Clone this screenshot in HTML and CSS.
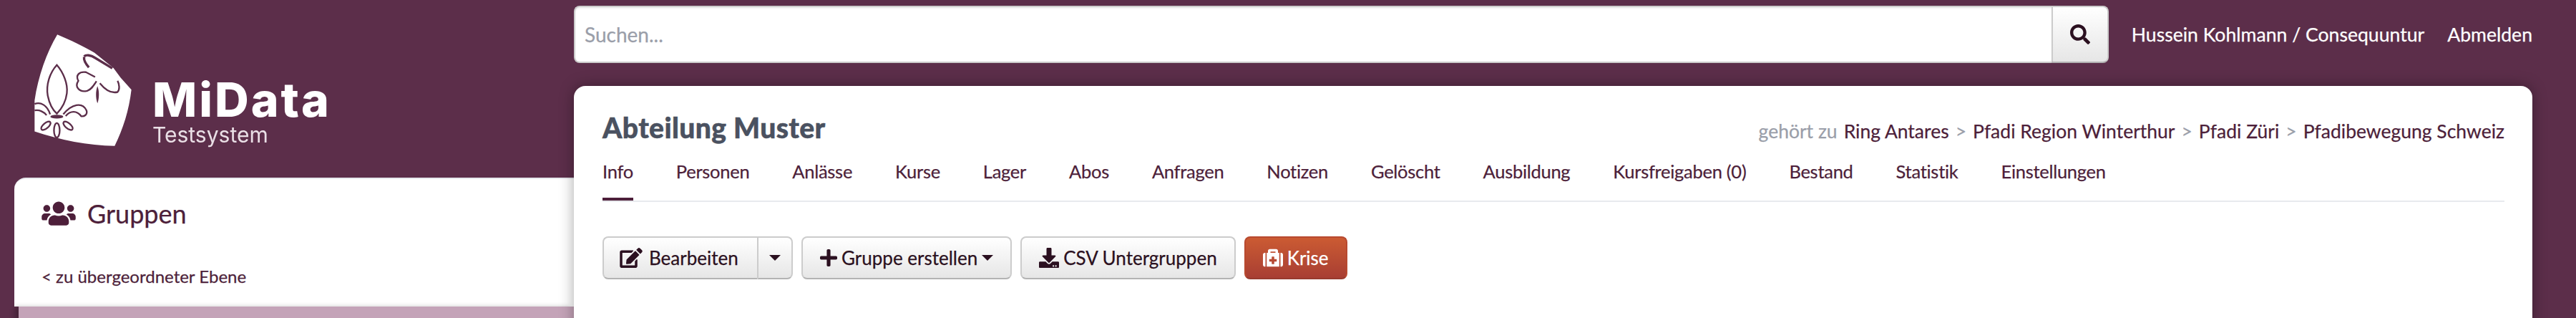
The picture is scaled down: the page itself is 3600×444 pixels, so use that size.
FILE: index.html
```html
<!DOCTYPE html>
<html lang="de">
<head>
<meta charset="utf-8">
<title>MiData</title>
<link rel="stylesheet" href="styles.css">
</head>
<body>
<div class="page">
  <aside class="aside">
    <div class="brand">
      <svg class="crest" viewBox="84 54 410 470" aria-hidden="true">
        <path class="crest-body" d="M180 55C235 78 290 105 335 130L415 195L445 235L490 285C480 370 455 450 420 520C310 520 190 495 85 460L85 330C100 230 135 130 180 55Z"/>
        <path class="crest-line" d="M178 182C148 215 132 265 140 310C147 345 163 372 178 385C195 368 215 340 220 300C225 262 205 212 178 182Z"/>
        <path class="crest-line" d="M205 388C240 345 285 335 302 372C308 390 292 398 280 396C262 372 235 372 215 395"/>
        <path class="crest-line" d="M85 345C110 335 138 350 150 388M85 372C105 368 125 378 135 392"/>
        <ellipse class="crest-fill" cx="178" cy="398" rx="27" ry="8"/>
        <ellipse class="crest-line" cx="132" cy="436" rx="24" ry="11" transform="rotate(-40 132 436)"/>
        <ellipse class="crest-line" cx="178" cy="455" rx="12" ry="30"/>
        <ellipse class="crest-line" cx="225" cy="436" rx="24" ry="11" transform="rotate(40 225 436)"/>
        <path class="crest-line" d="M338 232L300 212C272 208 255 225 268 248C252 272 270 298 305 290C322 285 332 268 344 250"/>
        <path class="crest-thick" d="M292 146C300 138 320 140 338 152L410 196M292 148C290 162 300 178 312 192"/>
        <path class="crest-line" d="M358 258C380 285 405 302 432 295C442 285 440 262 432 248"/>
        <path class="crest-fill" d="M348 270C356 290 356 320 348 342C340 320 340 290 348 270Z"/>
      </svg>
      <div class="wordmark">
        <span class="wordmark-name">MiData</span>
        <span class="wordmark-sub">Testsystem</span>
      </div>
    </div>
    <section class="groups">
      <div class="groups-card">
        <h2 class="groups-title">
          <svg class="groups-icon" viewBox="0 0 640 512" aria-hidden="true"><path d="M96 224c35.3 0 64-28.7 64-64s-28.7-64-64-64-64 28.7-64 64 28.7 64 64 64zm448 0c35.3 0 64-28.7 64-64s-28.7-64-64-64-64 28.7-64 64 28.7 64 64 64zm32 32h-64c-17.6 0-33.5 7.1-45.1 18.6 40.3 22.1 68.9 62 75.1 109.4h66c17.7 0 32-14.3 32-32v-32c0-35.3-28.7-64-64-64zm-256 0c61.9 0 112-50.1 112-112S381.9 32 320 32 208 82.1 208 144s50.1 112 112 112zm76.8 32h-8.3c-20.8 10-43.9 16-68.5 16s-47.6-6-68.5-16h-8.3C179.6 288 128 339.6 128 403.2V432c0 26.5 21.5 48 48 48h288c26.5 0 48-21.5 48-48v-28.8c0-63.6-51.6-115.2-115.2-115.2zm-223.7-13.4C161.5 263.1 145.6 256 128 256H64c-35.3 0-64 28.7-64 64v32c0 17.7 14.3 32 32 32h65.9c6.3-47.4 34.9-87.3 75.2-109.4z"/></svg>
          Gruppen
        </h2>
        <a class="groups-up" href="#">&lt; zu übergeordneter Ebene</a>
      </div>
      <div class="groups-current"></div>
    </section>
  </aside>
  <div class="content">
    <header class="topbar">
      <form class="search">
        <input class="search-input" type="text" placeholder="Suchen...">
        <button class="search-btn" type="button" aria-label="Suchen">
          <svg class="search-icon" viewBox="0 0 512 512" aria-hidden="true"><path d="M505 442.7L405.3 343c-4.5-4.5-10.6-7-17-7H372c27.6-35.3 44-79.7 44-128C416 93.1 322.9 0 208 0S0 93.1 0 208s93.1 208 208 208c48.3 0 92.7-16.4 128-44v16.3c0 6.4 2.5 12.5 7 17l99.7 99.7c9.4 9.4 24.6 9.4 33.9 0l28.3-28.3c9.4-9.4 9.4-24.6.1-34zM208 336c-70.7 0-128-57.2-128-128 0-70.7 57.2-128 128-128 70.7 0 128 57.2 128 128 0 70.7-57.2 128-128 128z"/></svg>
        </button>
      </form>
      <nav class="usernav">
        <a class="usernav-link" href="#">Hussein Kohlmann / Consequuntur</a>
        <a class="usernav-link" href="#">Abmelden</a>
      </nav>
    </header>
    <main class="card">
      <div class="head">
        <h1 class="title">Abteilung Muster</h1>
        <div class="crumbs">
          <span class="muted">gehört zu</span>
          <a class="crumb" href="#">Ring Antares</a>
          <span class="muted">&gt;</span>
          <a class="crumb" href="#">Pfadi Region Winterthur</a>
          <span class="muted">&gt;</span>
          <a class="crumb" href="#">Pfadi Züri</a>
          <span class="muted">&gt;</span>
          <a class="crumb" href="#">Pfadibewegung Schweiz</a>
        </div>
      </div>
      <nav class="tabs">
        <a class="tab tab-active" href="#">Info</a>
        <a class="tab" href="#">Personen</a>
        <a class="tab" href="#">Anlässe</a>
        <a class="tab" href="#">Kurse</a>
        <a class="tab" href="#">Lager</a>
        <a class="tab" href="#">Abos</a>
        <a class="tab" href="#">Anfragen</a>
        <a class="tab" href="#">Notizen</a>
        <a class="tab" href="#">Gelöscht</a>
        <a class="tab" href="#">Ausbildung</a>
        <a class="tab" href="#">Kursfreigaben (0)</a>
        <a class="tab" href="#">Bestand</a>
        <a class="tab" href="#">Statistik</a>
        <a class="tab" href="#">Einstellungen</a>
      </nav>
      <div class="actions">
        <div class="btn-group">
          <a class="btn btn-main" href="#">
            <svg class="icon icon-edit" viewBox="0 0 576 512" aria-hidden="true"><path d="M402.6 83.2l90.2 90.2c3.8 3.8 3.8 10 0 13.8L274.4 405.6l-92.8 10.3c-12.4 1.4-22.9-9.1-21.5-21.5l10.3-92.8L388.8 83.2c3.8-3.8 10-3.8 13.8 0zm162-22.9l-48.8-48.8c-15.2-15.2-39.9-15.2-55.2 0l-35.4 35.4c-3.8 3.8-3.8 10 0 13.8l90.2 90.2c3.8 3.8 10 3.8 13.8 0l35.4-35.4c15.2-15.3 15.2-40 0-55.2zM384 346.2V448H64V128h229.8c3.2 0 6.2-1.3 8.5-3.5l40-40c7.6-7.6 2.2-20.5-8.5-20.5H48C21.5 64 0 85.5 0 112v352c0 26.5 21.5 48 48 48h352c26.5 0 48-21.5 48-48V306.2c0-10.7-12.9-16-20.5-8.5l-40 40c-2.2 2.3-3.5 5.3-3.5 8.5z"/></svg>
            Bearbeiten
          </a>
          <a class="btn btn-toggle" href="#" aria-label="Mehr"><span class="caret"></span></a>
        </div>
        <a class="btn" href="#">
          <svg class="icon icon-plus" viewBox="0 0 448 512" aria-hidden="true"><path d="M416 208H272V64c0-17.67-14.33-32-32-32h-32c-17.67 0-32 14.33-32 32v144H32c-17.67 0-32 14.33-32 32v32c0 17.67 14.33 32 32 32h144v144c0 17.67 14.33 32 32 32h32c17.67 0 32-14.33 32-32V304h144c17.67 0 32-14.33 32-32v-32c0-17.67-14.33-32-32-32z"/></svg>
          Gruppe erstellen<span class="caret caret-inline"></span>
        </a>
        <a class="btn" href="#">
          <svg class="icon icon-download" viewBox="0 0 512 512" aria-hidden="true"><path d="M216 0h80c13.3 0 24 10.7 24 24v168h87.7c17.8 0 26.7 21.5 14.1 34.1L269.7 378.3c-7.5 7.5-19.8 7.5-27.3 0L90.1 226.1c-12.6-12.6-3.7-34.1 14.1-34.1H192V24c0-13.3 10.7-24 24-24zm296 376v112c0 13.3-10.7 24-24 24H24c-13.3 0-24-10.7-24-24V376c0-13.3 10.7-24 24-24h146.7l49 49c20.1 20.1 52.5 20.1 72.6 0l49-49H488c13.3 0 24 10.7 24 24zm-124 88c0-11-9-20-20-20s-20 9-20 20 9 20 20 20 20-9 20-20zm64 0c0-11-9-20-20-20s-20 9-20 20 9 20 20 20 20-9 20-20z"/></svg>
          CSV Untergruppen
        </a>
        <a class="btn btn-danger" href="#">
          <svg class="icon icon-medkit" viewBox="0 0 512 512" aria-hidden="true"><path d="M96 480h320V128h-32V80c0-26.51-21.49-48-48-48H176c-26.51 0-48 21.49-48 48v48H96v352zm96-384h128v32H192V96zm160 248c0 4.418-3.582 8-8 8h-56v56c0 4.418-3.582 8-8 8h-48c-4.418 0-8-3.582-8-8v-56h-56c-4.418 0-8-3.582-8-8v-48c0-4.418 3.582-8 8-8h56v-56c0-4.418 3.582-8 8-8h48c4.418 0 8 3.582 8 8v56h56c4.418 0 8 3.582 8 8v48zm160-168v256c0 26.51-21.49 48-48 48h-16V128h16c26.51 0 48 21.49 48 48zM64 128v352H48c-26.51 0-48-21.49-48-48V176c0-26.51 21.49-48 48-48h16z"/></svg>
          Krise
        </a>
      </div>
    </main>
  </div>
</div>
</body>
</html>
```

FILE: styles.css
```css
* { box-sizing: border-box; }
html, body { margin: 0; height: 444px; overflow: hidden; }
body {
  background: #5c2e4a;
  font-family: "Lato", "Noto Sans", sans-serif;
  font-size: 26px;
  color: #4d1f3a;
  -webkit-text-stroke: .25px;
}
a { color: inherit; text-decoration: none; }

.page { display: flex; height: 444px; overflow: hidden; }

/* left column */
.aside { flex: 0 0 802px; padding-left: 20px; }
.brand { height: 248px; padding: 48px 0 0 28px; display: flex; gap: 28px; }
.crest { width: 137px; height: 157px; filter: blur(.6px); flex: none; }
.crest-body { fill: #fff; }
.crest-line { fill: none; stroke: #5c2e4a; stroke-width: 7; }
.crest-thick { fill: none; stroke: #5c2e4a; stroke-width: 10; }
.crest-fill { fill: #5c2e4a; }
.wordmark { display: flex; flex-direction: column; filter: blur(.6px); color: #fff; padding-top: 58px; }
.wordmark-name { font-family: "Inter", sans-serif; font-weight: 800; font-size: 66px; line-height: 66px; letter-spacing: 3px; -webkit-text-stroke: 0; }
.wordmark-sub { font-family: "Inter", sans-serif; font-size: 30px; line-height: 32px; color: #eadfe6; -webkit-text-stroke: 0; }

.groups-card {
  height: 180px;
  background: #fff;
  border-top: 2px solid #e8eaee;
  border-top-left-radius: 16px;
  padding: 26px 0 0 38px;
}
.groups-title {
  margin: 0;
  display: flex;
  align-items: center;
  gap: 16px;
  font-size: 36px;
  font-weight: 400;
  line-height: 44px;
}
.groups-icon { width: 48px; height: 38px; fill: #4d1f3a; flex: none; }
.groups-up { display: block; margin-top: 48px; font-size: 24px; line-height: 36px; }
.groups-current {
  height: 40px;
  margin-left: 6px;
  background: #c4a3b8;
  box-shadow: -6px 0 6px rgba(0, 0, 0, .22);
}

/* right column */
.content { flex: 0 0 2737px; position: relative; }
.topbar {
  display: flex;
  justify-content: space-between;
  align-items: center;
  height: 80px;
  margin-top: 8px;
}
.search { display: flex; width: 2145px; height: 80px; }
.search-input {
  flex: 1;
  border: 2px solid #ccc;
  border-right: 0;
  border-radius: 8px 0 0 8px;
  padding: 0 13px;
  background: #fff;
  font: inherit;
  font-size: 28px;
  color: #333;
  outline: 0;
  box-shadow: inset 0 2px 2px rgba(0, 0, 0, .06);
}
.search-input::placeholder { color: #9a9ea9; opacity: 1; }
.search-btn {
  width: 80px;
  display: flex;
  align-items: center;
  justify-content: center;
  border: 2px solid #ccc;
  border-bottom-color: #b3b3b3;
  border-radius: 0 8px 8px 0;
  background: linear-gradient(#fff, #e6e6e6);
  padding: 0;
}
.search-icon { width: 28px; height: 28px; fill: #2b1020; }
.usernav { display: flex; gap: 32px; color: #fff; font-size: 26.6px; }
.usernav-link { line-height: 36px; white-space: nowrap; }

.card {
  margin-top: 32px;
  height: 400px;
  padding: 0 39px 0 40px;
  background: #fff;
  border-radius: 16px 16px 0 0;
  box-shadow: 0 0 20px rgba(0, 0, 0, .35);
}
.head {
  display: flex;
  justify-content: space-between;
  align-items: baseline;
  padding-top: 34px;
}
.title { margin: 0; font-size: 39px; letter-spacing: .4px; line-height: 48px; font-weight: 900; color: #4a5160; white-space: nowrap; -webkit-text-stroke: .5px; }
.crumbs { display: flex; gap: 9px; font-size: 26.5px; white-space: nowrap; }
.muted { color: #9a9ea9; }

.tabs {
  display: flex;
  gap: 60px;
  margin-top: 20px;
  height: 60px;
  border-bottom: 2px solid #e8eaee;
  font-size: 25.5px;
  letter-spacing: -.28px;
}
.tab { height: 58px; line-height: 34px; white-space: nowrap; }
.tab-active { border-bottom: 4px solid #4d1f3a; }

.actions { display: flex; gap: 12px; margin-top: 48px; }
.btn-group { display: flex; }
.btn {
  display: flex;
  align-items: center;
  height: 60px;
  padding: 0 24px;
  gap: 6px;
  border: 2px solid #ccc;
  border-bottom-color: #b3b3b3;
  border-radius: 8px;
  background: linear-gradient(#fff, #e6e6e6);
  color: #2b1020;
  white-space: nowrap;
}
.btn-main { border-radius: 8px 0 0 8px; border-right: 0; width: 216px; gap: 9px; padding: 0 22px; }
.btn-toggle { border-radius: 0 8px 8px 0; width: 50px; justify-content: center; padding: 0; }
.btn-danger {
  color: #fff;
  border-color: #b8492f;
  border-bottom-color: #983a2e;
  background: linear-gradient(#cb5b33, #a83e33);
}
.icon { fill: currentColor; flex: none; height: 28px; }
.icon-edit { width: 32px; }
.icon-plus { width: 24px; }
.icon-download { width: 28px; }
.icon-medkit { width: 28px; }
.caret {
  width: 0;
  height: 0;
  border-left: 8px solid transparent;
  border-right: 8px solid transparent;
  border-top: 8px solid #2b1020;
}
.caret-inline { margin-left: 0; }
```
